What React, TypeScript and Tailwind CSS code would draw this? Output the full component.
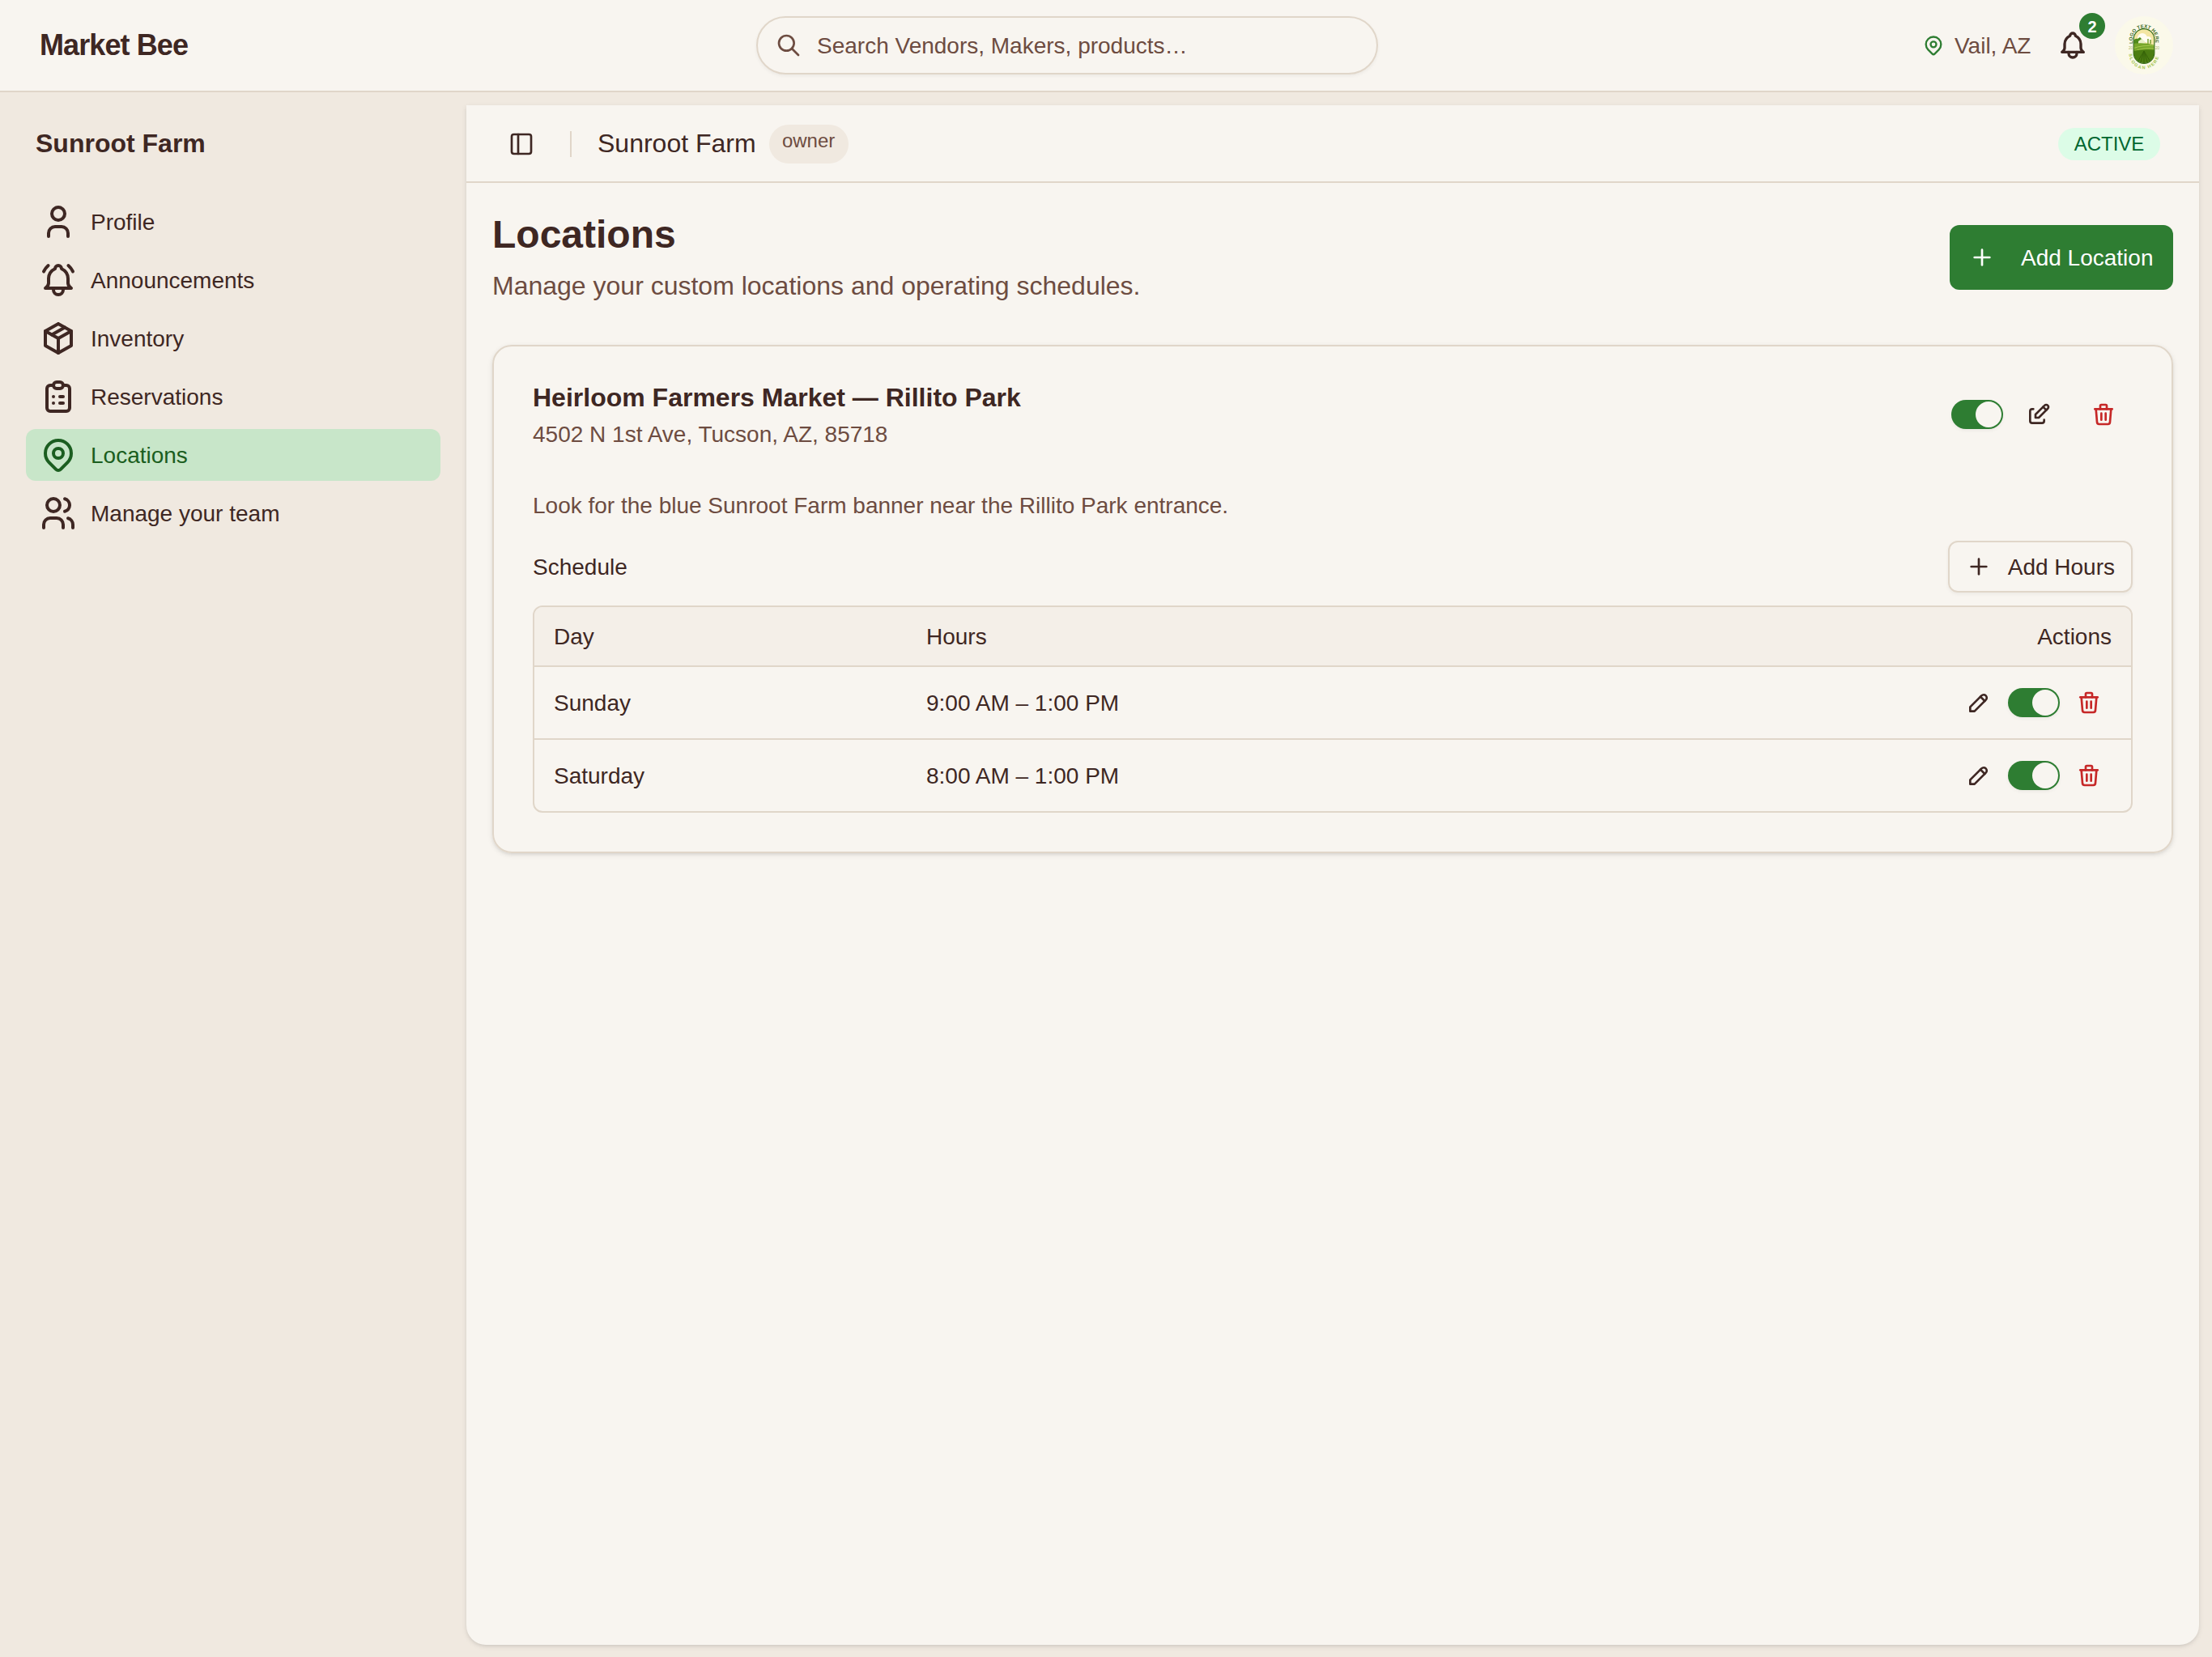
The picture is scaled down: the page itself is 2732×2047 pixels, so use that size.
import { PanelLeft } from "lucide-react";
import {
  TbBell,
  TbBellRinging,
  TbClipboardList,
  TbEdit,
  TbMapPin,
  TbPackage,
  TbPencil,
  TbPlus,
  TbSearch,
  TbTrash,
  TbUser,
  TbUsers,
} from "react-icons/tb";
import { clsx } from "clsx";
import { useState } from "react";

const NAV_ITEMS = [
  { label: "Profile", icon: TbUser },
  { label: "Announcements", icon: TbBellRinging },
  { label: "Inventory", icon: TbPackage },
  { label: "Reservations", icon: TbClipboardList },
  { label: "Locations", icon: TbMapPin },
  { label: "Manage your team", icon: TbUsers },
];

const SCHEDULE = [
  { day: "Sunday", hours: "9:00 AM – 1:00 PM" },
  { day: "Saturday", hours: "8:00 AM – 1:00 PM" },
];

function Switch() {
  const [checked, setChecked] = useState(true);

  return (
    <button
      role="switch"
      aria-checked={checked}
      onClick={() => setChecked(!checked)}
      className={clsx(
        "flex h-9 w-16 items-center rounded-full p-0.5 shadow-[0_2px_4px_rgba(0,0,0,0.05)]",
        checked ? "justify-end bg-[#2e7d32]" : "justify-start bg-[#e0d6c9]"
      )}
    >
      <span className="size-8 rounded-full bg-[#f8f5f0]" />
    </button>
  );
}

function FarmLogo() {
  return (
    <svg viewBox="0 0 72 72" className="size-[72px]">
      <defs>
        <clipPath id="farm-pill">
          <rect x="23.5" y="16" width="25" height="42" rx="12.5" />
        </clipPath>
        <path id="logo-top" d="M21.8 34V28.5A14.2 14 0 0 1 50.2 28.5V34" />
        <path id="logo-bottom" d="M17.6 46.5A18.4 18.8 0 0 0 54.4 46.5" />
      </defs>
      <circle cx="36" cy="36" r="36" fill="#fbf9ea" />
      <g clipPath="url(#farm-pill)">
        <rect x="22" y="14" width="28" height="46" fill="#f3e6a4" />
        <circle cx="34" cy="27" r="6" fill="#fffdf2" />
        <circle cx="41" cy="29" r="4" fill="#fffdf2" />
        <path d="M22 34c1-5 3-7 6-6l3-2 3 3v5z" fill="#4f8a1c" />
        <path d="M29 35v-4l4-3 4 3v4z" fill="#e9f0c9" />
        <path d="M41 34v-6M44 34v-5" stroke="#7fa53a" strokeWidth="1.6" />
        <path d="M22 34q14-2 28 2v10H22z" fill="#76a62a" />
        <path d="M22 40q12-5 28-3M22 44q14-6 28-4" stroke="#a6c84f" strokeWidth="1" fill="none" />
        <path d="M22 43q14-3 28-1v18H22z" fill="#4b7d12" />
        <path d="M36 43L26 60M36 43L31 60M36 43v17M36 43l5 17M36 43l10 17" stroke="#376409" strokeWidth="1" />
      </g>
      <rect x="23.2" y="15.7" width="25.6" height="42.6" rx="12.8" fill="none" stroke="#356b16" strokeWidth="1.2" />
      <text fontFamily="Liberation Sans, sans-serif" fontWeight="700" fontSize="6" fill="#3d6b1f">
        <textPath href="#logo-top" textLength="54">LOGO TEXT HERE</textPath>
      </text>
      <text fontFamily="Liberation Sans, sans-serif" fontWeight="700" fontSize="5.5" fill="#a3c44c">
        <textPath href="#logo-bottom" textLength="54">SLOGAN HERE</textPath>
      </text>
      <text x="17" y="41.2" fontFamily="Liberation Sans, sans-serif" fontSize="4.6" fill="#a9b86a">20</text>
      <text x="50" y="41.2" fontFamily="Liberation Sans, sans-serif" fontSize="4.6" fill="#a9b86a">20</text>
    </svg>
  );
}

function TopBar() {
  return (
    <header className="flex h-[114px] items-center border-b-2 border-[#e0d6c9] bg-[#f8f5f0] pr-12 pl-12">
      <div className="w-[886px] pl-px text-4xl leading-10 font-bold tracking-tight">Market Bee</div>
      <div className="flex h-[72px] w-[768px] items-center gap-[19px] rounded-full border-2 border-[#e0d6c9] px-[22px] text-[#6d4c41] shadow-[0_2px_4px_rgba(0,0,0,0.05)]">
        <TbSearch className="size-8" />
        <span className="pt-0.5">Search Vendors, Makers, products…</span>
      </div>
      <div className="ml-auto flex items-center">
        <div className="flex items-center gap-3 text-[#6d4c41]">
          <TbMapPin className="size-7 text-[#2e7d32]" />
          <span className="w-[126px] pt-0.5">Vail, AZ</span>
        </div>
        <div className="relative mr-8">
          <TbBell className="size-10" />
          <span className="absolute -top-5 left-7 flex size-8 items-center justify-center rounded-full bg-[#2e7d32] pt-0.5 text-xl font-bold text-white">
            2
          </span>
        </div>
        <FarmLogo />
      </div>
    </header>
  );
}

function Sidebar() {
  const [active, setActive] = useState("Locations");

  return (
    <aside className="w-[576px] px-8 pt-9">
      <h2 className="px-3 text-[32px] leading-[54px] font-bold">Sunroot Farm</h2>
      <nav className="mt-[38px] flex flex-col gap-2">
        {NAV_ITEMS.map(({ label, icon: Icon }) => (
          <button
            key={label}
            onClick={() => setActive(label)}
            className={clsx(
              "flex h-16 w-[512px] items-center gap-4 rounded-xl px-4",
              active === label && "bg-[#c8e6c9] text-[#1b5e20]"
            )}
          >
            <Icon className="size-12" />
            <span className="pt-0.5">{label}</span>
          </button>
        ))}
      </nav>
    </aside>
  );
}

function ScheduleTable() {
  return (
    <div className="mt-4 overflow-hidden rounded-xl border-2 border-[#e0d6c9]">
      <div className="flex h-[74px] items-center border-b-2 border-[#e0d6c9] bg-[#f4efe8] px-6 pt-0.5">
        <span className="w-[460px]">Day</span>
        <span>Hours</span>
        <span className="ml-auto">Actions</span>
      </div>
      <div className="divide-y-2 divide-[#e0d6c9]">
        {SCHEDULE.map(({ day, hours }) => (
          <div key={day} className="flex h-[88px] items-center px-6 not-last:h-[90px]">
            <span className="w-[460px] pt-0.5">{day}</span>
            <span className="pt-0.5">{hours}</span>
            <div className="ml-auto flex items-center gap-2">
              <button className="flex size-14 items-center justify-center">
                <TbPencil className="size-8" />
              </button>
              <Switch />
              <button className="flex size-14 items-center justify-center text-[#c62828]">
                <TbTrash className="size-8" />
              </button>
            </div>
          </div>
        ))}
      </div>
    </div>
  );
}

function LocationCard() {
  return (
    <section className="mt-12 rounded-3xl border-2 border-[#e0d6c9] p-12 shadow-[0_2px_6px_rgba(0,0,0,0.1),0_2px_4px_-2px_rgba(0,0,0,0.1)]">
      <div className="flex h-20 items-start justify-between">
        <div className="flex flex-col gap-2.5">
          <h3 className="text-[32px] leading-[31px] font-bold">Heirloom Farmers Market — Rillito Park</h3>
          <p className="text-[#6d4c41]">4502 N 1st Ave, Tucson, AZ, 85718</p>
        </div>
        <div className="flex items-center gap-2">
          <Switch />
          <button className="flex size-[72px] items-center justify-center">
            <TbEdit className="size-8" />
          </button>
          <button className="flex size-[72px] items-center justify-center text-[#c62828]">
            <TbTrash className="size-8" />
          </button>
        </div>
      </div>
      <p className="mt-[49px] text-[#6d4c41]">Look for the blue Sunroot Farm banner near the Rillito Park entrance.</p>
      <div className="mt-[23px] flex items-center justify-between">
        <h4 className="pt-0.5">Schedule</h4>
        <button className="flex h-16 items-center gap-5 rounded-xl border-2 border-[#e0d6c9] px-5 shadow-[0_2px_4px_rgba(0,0,0,0.05)]">
          <TbPlus className="size-8" />
          <span className="pt-0.5">Add Hours</span>
        </button>
      </div>
      <ScheduleTable />
    </section>
  );
}

export default function App() {
  return (
    <div className="flex h-[2047px] w-[2732px] flex-col bg-[#f0e9e0] font-['Liberation_Sans',Arial,sans-serif] text-[28px] leading-10 text-[#3e2723]">
      <TopBar />
      <div className="flex flex-1">
        <Sidebar />
        <main className="mt-4 h-[1902px] w-[2140px] rounded-b-3xl bg-[#f8f5f0] shadow-[0_2px_6px_rgba(0,0,0,0.1),0_2px_4px_-2px_rgba(0,0,0,0.1)]">
          <div className="flex h-24 items-center border-b-2 border-[#e0d6c9] pt-0.5 pr-12 pl-10">
            <button className="flex size-14 items-center justify-center">
              <PanelLeft className="size-8" />
            </button>
            <div className="mx-8 h-8 w-0.5 bg-[#e0d6c9]" />
            <h1 className="pb-0.5 text-[32px]">Sunroot Farm</h1>
            <span className="ml-4 w-[98px] rounded-full bg-[#f0e9e0] pt-1 pb-3 text-center text-2xl text-[#6d4c41]">
              owner
            </span>
            <span className="ml-auto w-[126px] rounded-full bg-[#dcfce7] py-1 text-center text-2xl text-[#016630]">
              ACTIVE
            </span>
          </div>
          <div className="p-8">
            <div className="flex items-center justify-between">
              <div>
                <h2 className="text-5xl leading-16 font-bold">Locations</h2>
                <p className="mt-[7px] mb-px text-[32px] leading-12 text-[#6d4c41]">
                  Manage your custom locations and operating schedules.
                </p>
              </div>
              <button className="flex h-20 w-[276px] items-center gap-8 rounded-xl bg-[#2e7d32] pl-6 text-white">
                <TbPlus className="size-8" />
                <span className="pt-0.5 whitespace-nowrap">Add Location</span>
              </button>
            </div>
            <LocationCard />
          </div>
        </main>
      </div>
    </div>
  );
}
